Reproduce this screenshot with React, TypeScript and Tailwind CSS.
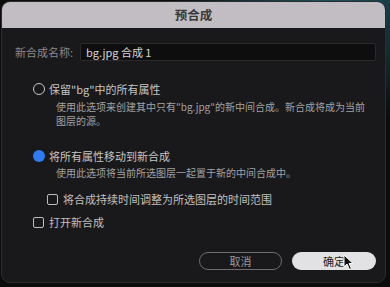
import React from "react";

const font = { fontFamily: '"Noto Sans CJK SC", "Noto Sans", sans-serif' };

function Radio({ checked }: { checked?: boolean }) {
    if (checked) {
        return <span className="block w-[12px] h-[12px] rounded-full bg-[#2f7cf0]" />;
    }
    return <span className="block w-[12px] h-[12px] rounded-full border-[1.5px] border-[#c9c9c9]" />;
}

function Checkbox() {
    return <span className="block w-[11px] h-[11px] rounded-[2px] border border-[#bdbdbd]" />;
}

export default function App() {
    return (
        <div
            className="relative w-[390px] h-[287px] overflow-hidden bg-[#0c0c0d] bg-[radial-gradient(ellipse_at_85%_-10%,#1f5e6a_0%,#0c0c0d_35%)]"
            style={font}
        >
            <div className="absolute left-[1px] top-[1px] w-[385px] h-[282px] rounded-[9px] overflow-hidden border border-[#2c2c2d] bg-[#19181a] flex flex-col">
                <div className="h-[26px] shrink-0 bg-[#c1bdc2] flex items-center justify-center">
                    <span className="text-[12.5px] font-bold text-[#3a393b]">预合成</span>
                </div>
                <div className="flex flex-col pl-[13px] pr-[9px] pt-[15px]">
                    <div className="flex items-center h-[18px]">
                        <span className="w-[65px] text-[11px] text-[#8b8a8c]">新合成名称:</span>
                        <div className="flex-1 h-[18px] bg-[#0e0e0f] border border-[#2a2a2b] rounded-[2px] flex items-center pl-[5px]">
                            <span className="text-[11px] text-[#d6d6d6]">bg.jpg 合成 1</span>
                        </div>
                    </div>

                    <div className="mt-[21px] ml-[18px] flex items-center gap-[4px] h-[14px]">
                        <Radio />
                        <span className="text-[11px] text-[#c6c6c6]">保留"bg"中的所有属性</span>
                    </div>
                    <div className="ml-[41px] mt-[4px] text-[10px] leading-[14px] text-[#a3a3a3] w-[320px]">
                        使用此选项来创建其中只有"bg.jpg"的新中间合成。新合成将成为当前<br />图层的源。
                    </div>

                    <div className="mt-[21px] ml-[18px] flex items-center gap-[4px] h-[14px]">
                        <Radio checked />
                        <span className="text-[11px] text-[#c6c6c6]">将所有属性移动到新合成</span>
                    </div>
                    <div className="ml-[41px] mt-[3px] text-[10px] leading-[14px] text-[#a3a3a3]">
                        使用此选项将当前所选图层一起置于新的中间合成中。
                    </div>

                    <div className="mt-[12px] ml-[32px] flex items-center gap-[5px] h-[14px]">
                        <Checkbox />
                        <span className="text-[11px] text-[#c0c0c0]">将合成持续时间调整为所选图层的时间范围</span>
                    </div>
                    <div className="mt-[9px] ml-[18px] flex items-center gap-[5px] h-[14px]">
                        <Checkbox />
                        <span className="text-[11px] text-[#c0c0c0]">打开新合成</span>
                    </div>

                    <div className="mt-[23px] flex justify-end gap-[10px]">
                        <div className="w-[83px] h-[18px] rounded-full border border-[#6e6d6f] flex items-center justify-center">
                            <span className="text-[11px] text-[#9c9b9d]">取消</span>
                        </div>
                        <div className="w-[84px] h-[18px] rounded-full bg-[#e2e1e3] flex items-center justify-center">
                            <span className="text-[11px] text-[#232323]">确定</span>
                        </div>
                    </div>
                </div>
            </div>
            <svg className="absolute left-[343px] top-[254px]" width="12" height="17" viewBox="0 0 12 17">
                <path d="M1 1 L1 13 L4 10 L6.5 15.5 L8.5 14.5 L6 9.5 L10 9.5 Z" fill="#111" stroke="#fff" strokeWidth="1" strokeLinejoin="round" />
            </svg>
        </div>
    );
}
